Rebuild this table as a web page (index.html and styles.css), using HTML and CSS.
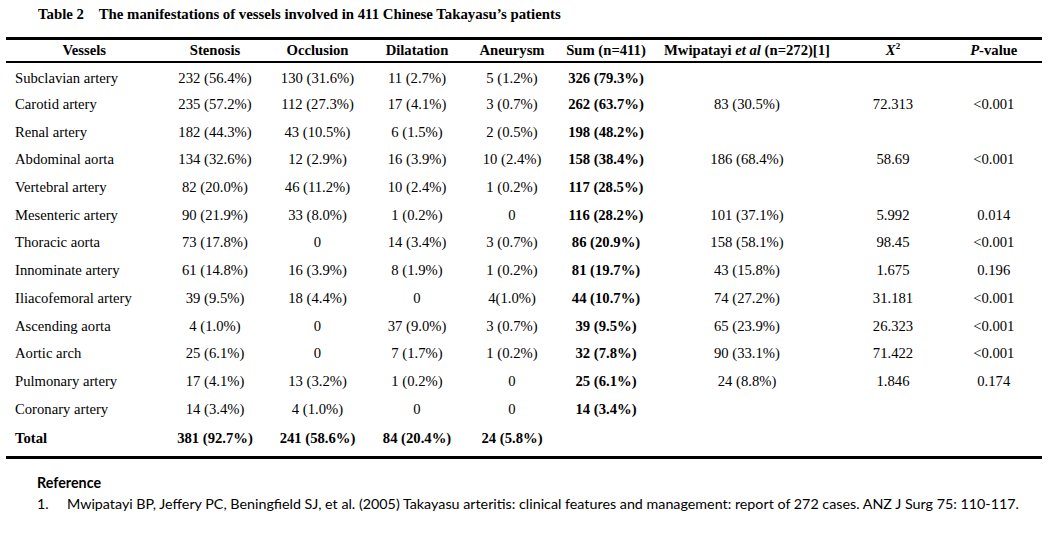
FILE: index.html
```html
<!DOCTYPE html>
<html lang="en">
<head>
<meta charset="utf-8">
<title>Table 2</title>
<link rel="stylesheet" href="styles.css">
</head>
<body>
<h1 class="caption">Table 2&nbsp;&nbsp;&nbsp;&nbsp;The manifestations of vessels involved in 411 Chinese Takayasu’s patients</h1>
<table class="data">
  <colgroup>
    <col class="c1"><col class="c2"><col class="c3"><col class="c4"><col class="c5"><col class="c6"><col class="c7"><col class="c8"><col class="c9">
  </colgroup>
  <thead>
    <tr>
      <th>Vessels</th><th>Stenosis</th><th>Occlusion</th><th>Dilatation</th><th>Aneurysm</th><th>Sum (n=411)</th><th>Mwipatayi <i>et al</i> (n=272)[1]</th><th><i>X</i><sup>2</sup></th><th><i>P</i>-value</th>
    </tr>
  </thead>
  <tbody>
    <tr class="first"><td>Subclavian artery</td><td>232 (56.4%)</td><td>130 (31.6%)</td><td>11 (2.7%)</td><td>5 (1.2%)</td><td class="b">326 (79.3%)</td><td></td><td></td><td></td></tr>
    <tr><td>Carotid artery</td><td>235 (57.2%)</td><td>112 (27.3%)</td><td>17 (4.1%)</td><td>3 (0.7%)</td><td class="b">262 (63.7%)</td><td>83 (30.5%)</td><td>72.313</td><td>&lt;0.001</td></tr>
    <tr><td>Renal artery</td><td>182 (44.3%)</td><td>43 (10.5%)</td><td>6 (1.5%)</td><td>2 (0.5%)</td><td class="b">198 (48.2%)</td><td></td><td></td><td></td></tr>
    <tr><td>Abdominal aorta</td><td>134 (32.6%)</td><td>12 (2.9%)</td><td>16 (3.9%)</td><td>10 (2.4%)</td><td class="b">158 (38.4%)</td><td>186 (68.4%)</td><td>58.69</td><td>&lt;0.001</td></tr>
    <tr><td>Vertebral artery</td><td>82 (20.0%)</td><td>46 (11.2%)</td><td>10 (2.4%)</td><td>1 (0.2%)</td><td class="b">117 (28.5%)</td><td></td><td></td><td></td></tr>
    <tr><td>Mesenteric artery</td><td>90 (21.9%)</td><td>33 (8.0%)</td><td>1 (0.2%)</td><td>0</td><td class="b">116 (28.2%)</td><td>101 (37.1%)</td><td>5.992</td><td>0.014</td></tr>
    <tr><td>Thoracic aorta</td><td>73 (17.8%)</td><td>0</td><td>14 (3.4%)</td><td>3 (0.7%)</td><td class="b">86 (20.9%)</td><td>158 (58.1%)</td><td>98.45</td><td>&lt;0.001</td></tr>
    <tr><td>Innominate artery</td><td>61 (14.8%)</td><td>16 (3.9%)</td><td>8 (1.9%)</td><td>1 (0.2%)</td><td class="b">81 (19.7%)</td><td>43 (15.8%)</td><td>1.675</td><td>0.196</td></tr>
    <tr><td>Iliacofemoral artery</td><td>39 (9.5%)</td><td>18 (4.4%)</td><td>0</td><td>4(1.0%)</td><td class="b">44 (10.7%)</td><td>74 (27.2%)</td><td>31.181</td><td>&lt;0.001</td></tr>
    <tr><td>Ascending aorta</td><td>4 (1.0%)</td><td>0</td><td>37 (9.0%)</td><td>3 (0.7%)</td><td class="b">39 (9.5%)</td><td>65 (23.9%)</td><td>26.323</td><td>&lt;0.001</td></tr>
    <tr><td>Aortic arch</td><td>25 (6.1%)</td><td>0</td><td>7 (1.7%)</td><td>1 (0.2%)</td><td class="b">32 (7.8%)</td><td>90 (33.1%)</td><td>71.422</td><td>&lt;0.001</td></tr>
    <tr><td>Pulmonary artery</td><td>17 (4.1%)</td><td>13 (3.2%)</td><td>1 (0.2%)</td><td>0</td><td class="b">25 (6.1%)</td><td>24 (8.8%)</td><td>1.846</td><td>0.174</td></tr>
    <tr><td>Coronary artery</td><td>14 (3.4%)</td><td>4 (1.0%)</td><td>0</td><td>0</td><td class="b">14 (3.4%)</td><td></td><td></td><td></td></tr>
    <tr class="total"><td>Total</td><td>381 (92.7%)</td><td>241 (58.6%)</td><td>84 (20.4%)</td><td>24 (5.8%)</td><td></td><td></td><td></td><td></td></tr>
  </tbody>
</table>
<section class="refs">
  <h2 class="refs-title">Reference</h2>
  <ol class="refs-list">
    <li><span class="num">1.</span><span>Mwipatayi BP, Jeffery PC, Beningfield SJ, et al. (2005) Takayasu arteritis: clinical features and management: report of 272 cases. ANZ J Surg 75: 110-117.</span></li>
  </ol>
</section>
</body>
</html>
```
FILE: styles.css
```css
html, body {
  margin: 0;
  padding: 0;
  background: #ffffff;
  color: #000000;
}
body {
  font-family: "Liberation Serif", "Times New Roman", serif;
  font-size: 14.67px;
}
.caption {
  margin: 0;
  padding: 6px 0 0 38px;
  height: 37px;
  box-sizing: border-box;
  font-size: 14.8px;
  font-weight: bold;
  line-height: 17px;
  white-space: pre;
}
.data {
  margin-left: 6px;
  width: 1036px;
  table-layout: fixed;
  border-collapse: collapse;
  border-top: 3px solid #000;
  border-bottom: 3px solid #000;
  font-family: "Liberation Serif", "Times New Roman", serif;
}
.c1 { width: 157.5px; }
.c2 { width: 103px; }
.c3 { width: 102px; }
.c4 { width: 97px; }
.c5 { width: 93px; }
.c6 { width: 95px; }
.c7 { width: 187px; }
.c8 { width: 105px; }
.c9 { width: 96.5px; }
.data th {
  height: 21px;
  padding: 0;
  font-weight: bold;
  text-align: center;
  vertical-align: middle;
  border-bottom: 2px solid #000;
  white-space: nowrap;
  line-height: 17px;
}
.data th sup {
  font-size: 9px;
  vertical-align: 6px;
  line-height: 0;
}
.data td {
  height: 27.7px;
  padding: 0;
  text-align: center;
  vertical-align: middle;
  white-space: nowrap;
  line-height: 17px;
}
.data .first td {
  height: 23.7px;
  padding-top: 4px;
}
.data td:first-child {
  text-align: left;
  padding-left: 9px;
}
.data th:first-child {
  padding-right: 1px;
}
.data td.b {
  font-weight: bold;
}
.total td {
  font-weight: bold;
  height: 28.7px;
  padding-top: 1px;
  padding-bottom: 3px;
}
.refs {
  padding: 15px 0 0 37px;
  font-family: Lato, "Open Sans", sans-serif;
  font-size: 14.3px;
}
.refs-title {
  margin: 0;
  font-size: 14.3px;
  font-weight: bold;
  line-height: 17px;
}
.refs-list {
  list-style: none;
  margin: 4px 0 0 0;
  padding: 0;
}
.refs-list li {
  display: flex;
  line-height: 17px;
}
.refs-list .num {
  width: 30px;
  flex: none;
}
```
